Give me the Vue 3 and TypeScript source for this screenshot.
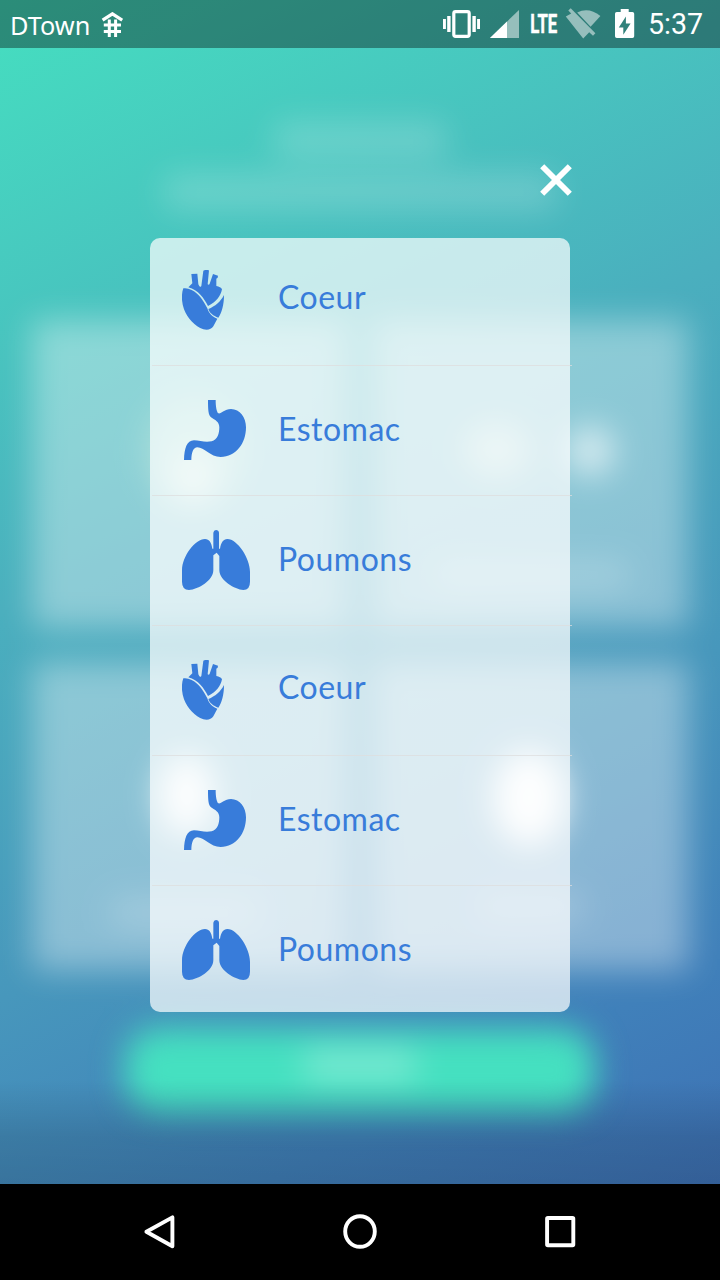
<script setup lang="ts">
type OrganKind = 'coeur' | 'estomac' | 'poumons'

interface Organ {
  id: number
  kind: OrganKind
  label: string
}

interface Glyph {
  viewBox: string
  width: number
  paths: string[]
}

const glyphs: Record<OrganKind, Glyph> = {
  coeur: {
    viewBox: '96 120 126 180',
    width: 42,
    paths: [
      'M100 175Q112 173 125 180C148 192 160 212 172 235C176 250 188 262 202 266L190 289C184 299 172 301 160 298C135 290 112 265 102 238C95 218 93 195 100 175Z',
      'M115 172L127 160L124 132L142 131L145 163Q150 175 154 168L160 122Q168 118 177 121L173 163Q177 166 179 161L189 132L204 137L203 143L199 146L199 168Q212 170 216 178C212 198 200 215 174 228C162 205 145 180 115 172Z',
      'M222 195C222 225 215 248 205 263C190 258 178 248 175 237C195 229 212 215 222 195Z',
    ],
  },
  estomac: {
    viewBox: '102 60 186 180',
    width: 62,
    paths: [
      'M174 60H197C197 80 200 96 205 100C213 103 222 87 243 87C270 87 288 112 288 142C288 190 258 231 212 231C180 231 163 202 142 202C130 202 124 218 124 240H102C103 205 110 182 132 181C150 182 165 188 185 184C203 180 208 160 208 142C208 125 195 120 183 112C175 105 174 90 174 60Z',
    ],
  },
  poumons: {
    viewBox: '96 60 204 180',
    width: 68,
    paths: [
      'M165 87C178 87 184 98 187 116H190V68Q191 60 198 60Q206 60 207 68V116H210C213 98 220 87 232 87C262 87 300 145 300 185V215Q300 240 280 240C255 238 208 212 208 180V138L200 128L190 136V180C190 212 145 238 117 240Q96 240 96 215V180C96 140 135 87 165 87Z',
    ],
  },
}

const organs: Organ[] = [
  { id: 1, kind: 'coeur', label: 'Coeur' },
  { id: 2, kind: 'estomac', label: 'Estomac' },
  { id: 3, kind: 'poumons', label: 'Poumons' },
  { id: 4, kind: 'coeur', label: 'Coeur' },
  { id: 5, kind: 'estomac', label: 'Estomac' },
  { id: 6, kind: 'poumons', label: 'Poumons' },
]
</script>

<template>
  <div class="phone">
    <div class="backdrop" aria-hidden="true">
      <div class="hero">
        <div class="soft hero-title"></div>
        <div class="soft hero-sub"></div>
      </div>
      <div class="tiles">
        <div class="tile tile-a"><i class="blob wide"></i><i class="blob core"></i></div>
        <div class="tile tile-b"><i class="blob left"></i><i class="blob right"></i><i class="blob caption"></i></div>
        <div class="tile tile-c"><i class="blob core"></i><i class="blob caption"></i></div>
        <div class="tile tile-d"><i class="blob core"></i><i class="blob caption"></i></div>
      </div>
      <div class="cta"><div class="cta-text"></div></div>
    </div>
    <div class="shade" aria-hidden="true"></div>

    <header class="status">
      <span class="carrier">DTown</span>
      <svg class="roof" width="22" height="26" viewBox="101 12 22 26" fill="none" stroke="#fff">
        <path d="M102.6 20.2L112.4 13.8L122.2 20.2" stroke-width="3.2" />
        <path d="M109.3 19.5V37M115.6 19.5V37M103.8 25.1H121M103.8 31.4H121" stroke-width="3" />
      </svg>
      <span class="grow"></span>
      <svg class="vibrate" width="38" height="30" viewBox="443 9 38 30" fill="#fff">
        <path d="M443 19h2.9v10h-2.9zM447.2 16h3.4v16h-3.4zM472.4 16h3.4v16h-3.4zM477.1 19h2.9v10h-2.9z" />
        <rect x="453.8" y="11.6" width="15.4" height="24.8" rx="1.8" fill="none" stroke="#fff" stroke-width="3.2" />
      </svg>
      <svg class="signal" width="30" height="30" viewBox="490 9 30 30">
        <path d="M490 38H519V10Z" fill="#fff" fill-opacity=".5" />
        <path d="M490 38H507V21.6Z" fill="#fff" />
      </svg>
      <svg class="lte" width="28" height="30" viewBox="530 9 28 30">
        <text x="530.2" y="33" textLength="27" lengthAdjust="spacingAndGlyphs">LTE</text>
      </svg>
      <svg class="wifi" width="36" height="32" viewBox="565 7 36 32" fill="#fff" fill-opacity=".5">
        <path d="M568.3 10.6L570.7 8.3L595.4 33.3L593 35.7L589.2 32.2L583.2 38.4L565.8 16.4L571.2 13.4Z" />
        <path d="M577.2 12.4Q589 6.8 600.4 16L590.6 26.8Z" />
      </svg>
      <svg class="battery" width="20" height="30" viewBox="615 9 20 30">
        <path d="M620.7 9H628.7V12H632.4Q634.2 12 634.2 13.8V36.2Q634.2 38 632.4 38H616.8Q615 38 615 36.2V13.8Q615 12 616.8 12H620.7Z" fill="#fff" />
        <path d="M625.9 16.4L618.8 27.4H623.3V34.8L630.6 23.6H625.9Z" fill="#31827b" />
      </svg>
      <time class="clock">5:37</time>
    </header>

    <main class="dialog">
      <button class="close" type="button" aria-label="Fermer">
        <svg width="32" height="32" viewBox="0 0 32 32" stroke="#fff" stroke-width="5.8">
          <path d="M2.2 2.2L29.8 29.8M29.8 2.2L2.2 29.8" />
        </svg>
      </button>
      <ul class="list">
        <li v-for="organ in organs" :key="organ.id" class="row" :class="organ.kind">
          <span class="icon">
            <svg :width="glyphs[organ.kind].width" height="60" :viewBox="glyphs[organ.kind].viewBox">
              <path v-for="d in glyphs[organ.kind].paths" :key="d" :d="d" />
            </svg>
          </span>
          <span class="label">{{ organ.label }}</span>
        </li>
      </ul>
    </main>

    <nav class="navbar">
      <svg width="36" height="40" viewBox="142 1212 36 40">
        <path d="M146.4 1231.8L172.4 1217.4V1246.2Z" stroke-linejoin="round" />
      </svg>
      <svg width="36" height="40" viewBox="342 1212 36 40">
        <ellipse cx="360" cy="1231.5" rx="14.8" ry="15.3" />
      </svg>
      <svg width="36" height="40" viewBox="542 1212 36 40">
        <rect x="547.1" y="1218" width="26.2" height="27.2" rx=".8" />
      </svg>
    </nav>
  </div>
</template>

<style>
body {
  margin: 0;
  background: #000;
}
</style>

<style scoped>
.phone {
  position: relative;
  display: flex;
  flex-direction: column;
  width: 720px;
  height: 1280px;
  overflow: hidden;
  background: linear-gradient(154deg, #45dfc0 0, #4aafbe 550px, #4797bc 899px, #4080ba 1180px, #3d6fb3 1400px);
  font-family: Lato, "Open Sans", sans-serif;
}

/* Out-of-focus home screen behind the dialog */
.backdrop {
  position: absolute;
  inset: 0;
  box-sizing: border-box;
  display: flex;
  flex-direction: column;
  align-items: center;
  padding-top: 122px;
  filter: blur(16px);
}
.hero {
  display: flex;
  flex-direction: column;
  align-items: center;
  gap: 16px;
  height: 198px;
}
.soft {
  height: 36px;
  border-radius: 10px;
  background: rgba(255, 255, 255, 0.2);
}
.hero-title {
  width: 174px;
}
.hero-sub {
  width: 394px;
}
.tiles {
  display: grid;
  grid-template-columns: 316px 316px;
  grid-template-rows: 308px 308px;
  gap: 34px 24px;
}
.tile {
  position: relative;
  background: rgba(255, 255, 255, 0.37);
}
.blob {
  position: absolute;
  border-radius: 50%;
  background: #fff;
}
.tile-a .wide {
  left: 113px;
  top: 75px;
  width: 100px;
  height: 110px;
  background: rgba(240, 255, 225, 0.28);
}
.tile-a .core {
  left: 138px;
  top: 130px;
  width: 46px;
  height: 56px;
  background: rgba(255, 255, 245, 0.5);
}
.tile-b .left {
  left: 92px;
  top: 103px;
  width: 66px;
  height: 54px;
  background: rgba(255, 255, 240, 0.45);
}
.tile-b .right {
  left: 193px;
  top: 106px;
  width: 50px;
  height: 50px;
  background: rgba(255, 255, 255, 0.62);
}
.tile-c .core {
  left: 127px;
  top: 92px;
  width: 56px;
  height: 82px;
  background: rgba(255, 255, 255, 0.92);
}
.tile-d .core {
  left: 121px;
  top: 88px;
  width: 72px;
  height: 96px;
  background: rgba(255, 255, 255, 0.95);
}
.caption {
  height: 30px;
  border-radius: 12px;
  background: rgba(255, 255, 255, 0.2);
}
.tile-b .caption {
  left: 60px;
  top: 240px;
  width: 198px;
}
.tile-c .caption {
  left: 78px;
  top: 236px;
  width: 150px;
}
.tile-d .caption {
  left: 104px;
  top: 230px;
  width: 108px;
}
.cta {
  box-sizing: border-box;
  width: 470px;
  height: 84px;
  margin-top: 58px;
  padding-top: 20px;
  border-radius: 34px;
  background: #45e0c0;
}
.cta-text {
  width: 114px;
  height: 34px;
  margin: 0 auto;
  border-radius: 10px;
  background: rgba(255, 255, 255, 0.27);
}
.shade {
  position: absolute;
  left: 0;
  right: 0;
  top: 1080px;
  height: 104px;
  background: linear-gradient(rgba(0, 0, 0, 0), rgba(0, 0, 0, 0.13) 55%, rgba(0, 0, 0, 0.16));
}

.status {
  position: relative;
  box-sizing: border-box;
  display: flex;
  align-items: flex-start;
  height: 48px;
  padding: 0 18px 0 10px;
  background: rgba(0, 0, 0, 0.37);
  color: #fff;
}
.status svg {
  display: block;
  flex: none;
  margin-top: 9px;
}
.carrier {
  width: 81px;
  margin-right: 10px;
  font: 25.3px/48px "Noto Sans", sans-serif;
  padding-top: 1px;
  white-space: nowrap;
}
.status .roof {
  margin-top: 12px;
}
.grow {
  flex: 1;
}
.signal {
  margin-left: 9px;
}
.lte {
  margin-left: 10px;
  overflow: visible;
}
.lte text {
  fill: #fff;
  stroke: #fff;
  stroke-width: 0.5;
  font: 700 25px Roboto, sans-serif;
}
.status .wifi {
  margin: 7px 0 0 7px;
}
.battery {
  margin-left: 14px;
}
.clock {
  width: 54px;
  margin-left: 13px;
  font: 28.6px/49px Roboto, sans-serif;
  white-space: nowrap;
}

.dialog {
  position: relative;
  flex: 1;
  display: flex;
  flex-direction: column;
  width: 420px;
  margin: 0 auto;
}
.close {
  align-self: flex-end;
  width: 32px;
  height: 32px;
  margin: 116px -2px 42px 0;
  padding: 0;
  border: 0;
  background: none;
}
.close svg {
  display: block;
}
.list {
  display: grid;
  grid-template-rows: 128px repeat(4, 130px) 126px;
  margin: 0;
  padding: 0;
  border-radius: 10px;
  background: rgba(255, 255, 255, 0.7);
  list-style: none;
}
.row {
  box-sizing: border-box;
  display: flex;
  width: 420px;
  margin-left: 2px;
  padding: 34px 0 0 30px;
  border-bottom: 1px solid rgba(222, 222, 222, 0.75);
}
.row:first-child {
  padding-top: 32px;
}
.row:last-child {
  border-bottom: 0;
}
.icon {
  width: 96px;
}
.icon svg {
  display: block;
  fill: #387cda;
}
.estomac .icon svg {
  margin-left: 2px;
}
.label {
  height: 60px;
  color: #387cda;
  font-size: 32px;
  line-height: 58px;
  letter-spacing: 0.5px;
}
.coeur .label {
  line-height: 54px;
}

.navbar {
  position: relative;
  display: flex;
  justify-content: space-between;
  box-sizing: border-box;
  height: 96px;
  padding: 28px 142px 0;
  background: #000;
}
.navbar svg {
  fill: none;
  stroke: #fff;
  stroke-width: 3.9;
}
</style>
